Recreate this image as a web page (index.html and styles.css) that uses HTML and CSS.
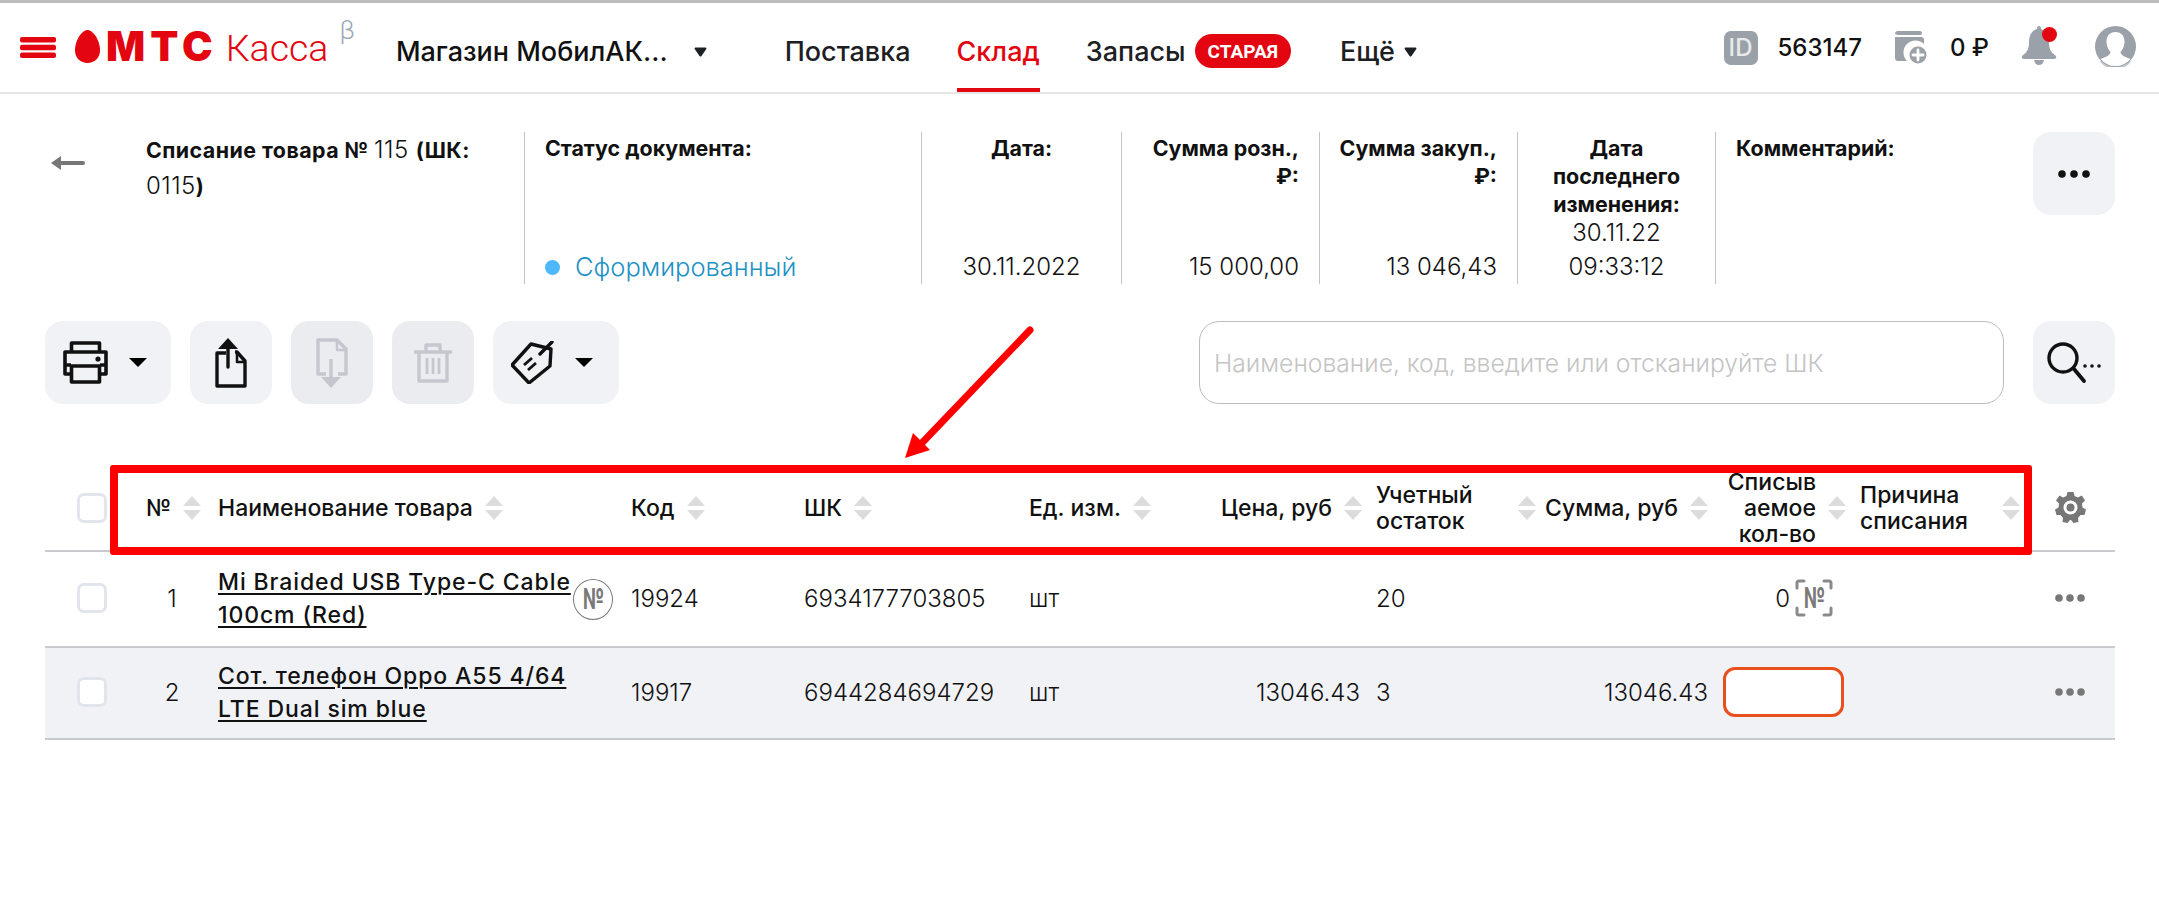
FILE: index.html
```html
<!DOCTYPE html>
<html lang="ru">
<head>
    <meta charset="UTF-8">
    <title>МТС Касса</title>
    <link rel="stylesheet" href="styles.css">
</head>
<body>
    <header class="topbar">
        <svg class="burger" width="36" height="21" viewBox="0 0 36 21" fill="#e30611"><rect width="36" height="5.4" rx="2"/><rect y="7.8" width="36" height="5.4" rx="2"/><rect y="15.6" width="36" height="5.4" rx="2"/></svg>
        <svg class="egg" width="25" height="33" viewBox="0 0 25 33" fill="#e30611"><path d="M12.5 0C7 0 0 10 0 20.500C0 28 5.500 33 12.500 33S25 28 25 20.500C25 10 18 0 12.500 0Z"/></svg>
        <span class="logo-mts">МТС</span>
        <span class="logo-kassa">Касса</span>
        <span class="logo-beta">β</span>
        <span class="store">Магазин МобилАК...</span>
        <svg class="caret-sm" width="13" height="10" viewBox="0 0 13 10"><path d="M1.500 0.500H11.500Q13 0.500 12.300 2L7.500 9Q6.500 10 5.500 9L0.700 2Q0 0.500 1.500 0.500Z"/></svg>
        <nav class="nav">
            <a class="nav-link">Поставка</a>
            <a class="nav-link active">Склад</a>
            <a class="nav-link">Запасы <span class="badge">СТАРАЯ</span></a>
            <a class="nav-link">Ещё
                <svg class="caret-sm" width="13" height="10" viewBox="0 0 13 10"><path d="M1.500 0.500H11.500Q13 0.500 12.300 2L7.500 9Q6.500 10 5.500 9L0.700 2Q0 0.500 1.500 0.500Z"/></svg>
            </a>
        </nav>
        <div class="user">
            <span class="id-box">ID</span>
            <span class="user-id">563147</span>
            <svg class="wallet" width="34" height="34" viewBox="0 0 34 34"><path fill="#9aa1a9" d="M3 0H25Q27 0 27 2T25 4H3V0ZM0 3Q0 0 3 0V4ZM0 6H26Q29 6 29 9V13A11 11 0 0 0 12 30H3Q0 30 0 27Z"/><circle cx="23" cy="24" r="10" fill="#fff"/><circle cx="23" cy="24" r="8.500" fill="#9aa1a9"/><path d="M23 19V29M18 24H28" stroke="#fff" stroke-width="2.800" stroke-linecap="round"/></svg>
            <span class="balance">0 ₽</span>
            <svg class="bell" width="36" height="40" viewBox="0 0 36 40"><path fill="#9aa1a9" d="M16 3Q16 0 18 0T20 3C26 5 28 10 28 17C28 24 31 27 35 30Q36 33 33 33H3Q0 33 1 30C5 27 8 24 8 17C8 10 10 5 16 3ZM13 34H23Q22 39 18 39T13 34Z"/><circle cx="28.500" cy="8.500" r="7.500" fill="#e30611"/></svg>
            <svg class="avatar" width="41" height="41" viewBox="0 0 41 41"><circle cx="20.500" cy="20.500" r="20.500" fill="#9aa1a9"/><path fill="#fff" d="M20.500 6C27 6 30 11 29.500 17C29 21 27.500 24 25.500 26C25.500 29 30 31 35.500 33A19.500 19.500 0 0 1 5.500 33C11 31 15.500 29 15.500 26C13.500 24 12 21 11.500 17C11 11 14 6 20.500 6Z"/><path fill="#9aa1a9" d="M6.500 34.500A19 19 0 0 0 34.500 34.500L36 36A20.500 20.500 0 0 1 5 36Z" opacity="0.600"/></svg>
        </div>
    </header>

    <main class="page">
        <section class="doc">
            <div class="doc-back">
                <svg width="34" height="14" viewBox="0 0 34 14" fill="#777"><path d="M0 7L10 0V5H32Q34 5 34 7T32 9H10V14Z"/></svg>
            </div>
            <div class="doc-title"><b>Списание товара № </b>115 <b>(ШК:</b> 0115<b>)</b></div>
            <div class="doc-col doc-status">
                <b>Статус документа:</b>
                <span class="status-value"><i class="status-dot"></i>Сформированный</span>
            </div>
            <div class="doc-col center">
                <b>Дата:</b>
                <span>30.11.2022</span>
            </div>
            <div class="doc-col right">
                <b>Сумма розн., ₽:</b>
                <span>15 000,00</span>
            </div>
            <div class="doc-col right">
                <b>Сумма закуп., ₽:</b>
                <span>13 046,43</span>
            </div>
            <div class="doc-col center">
                <b>Дата последнего изменения:</b>
                <span>30.11.22 09:33:12</span>
            </div>
            <div class="doc-col doc-comment">
                <b>Комментарий:</b>
            </div>
            <button class="tool square">
                <svg width="32" height="8" viewBox="0 0 32 8" fill="#111"><circle cx="4" cy="4" r="3.800"/><circle cx="16" cy="4" r="3.800"/><circle cx="28" cy="4" r="3.800"/></svg>
            </button>
        </section>

        <section class="toolbar">
            <button class="tool wide">
                <svg width="45" height="43" viewBox="0 0 45 43" fill="none" stroke="#111" stroke-width="3.600" stroke-linejoin="round"><path d="M8.500 11V2H36.500V11M8.500 33H2V11H43V33H36.500"/><path d="M8.500 25H36.500V41H8.500Z"/><path d="M2 24H8M37 24H43"/><circle cx="35" cy="18" r="2.600" fill="#111" stroke="none"/></svg>
                <svg class="caret" width="18" height="9" viewBox="0 0 18 9"><path d="M0 0H18L9 9Z"/></svg>
            </button>
            <button class="tool">
                <svg width="32" height="50" viewBox="0 0 32 50" fill="none" stroke="#111" stroke-width="3.400" stroke-linejoin="round"><path d="M11 15H2V48H30V23L22 14H20"/><path d="M22 14V24H30" stroke-width="2.500"/><path d="M13 29V10" stroke-linecap="round"/><path d="M13 0L23 11H3Z" fill="#111" stroke="none"/></svg>
            </button>
            <button class="tool off">
                <svg width="32" height="50" viewBox="0 0 32 50" fill="none" stroke="#c4c8ce" stroke-width="3.400" stroke-linejoin="round"><path d="M10 36H2V2H21L30 11V36H22"/><path d="M21 2V12H30" stroke-width="2.500"/><path d="M15 21V41"/><path d="M15 50L5 39H25Z" fill="#c4c8ce" stroke="none"/></svg>
            </button>
            <button class="tool off">
                <svg width="38" height="40" viewBox="0 0 38 40" fill="none" stroke="#c4c8ce" stroke-width="3.400" stroke-linejoin="round"><path d="M1 9H37" stroke-linecap="round"/><path d="M12 9V2H26V9"/><path d="M5 9V38H33V9"/><path d="M13 15V31M19 15V31M25 15V31" stroke-width="2.800"/></svg>
            </button>
            <button class="tool wide">
                <svg width="43" height="43" viewBox="0 0 43 43" fill="none" stroke="#111" stroke-width="3.400" stroke-linejoin="round"><path d="M20 3L40 8L39 25L18 42L1 24Z"/><path d="M29 13L41 1" stroke-linecap="round"/><path d="M13 24L21 17M17 29L25 22" stroke-width="2.800"/></svg>
                <svg class="caret" width="18" height="9" viewBox="0 0 18 9"><path d="M0 0H18L9 9Z"/></svg>
            </button>
            <div class="search-field">Наименование, код, введите или отсканируйте ШК</div>
            <button class="tool square">
                <svg width="54" height="44" viewBox="0 0 54 44" fill="none" stroke="#111"><circle cx="16" cy="17" r="14" stroke-width="3.400"/><path d="M27 28L37 40" stroke-width="3.800" stroke-linecap="round"/><circle cx="38" cy="25" r="1.800" fill="#111" stroke="none"/><circle cx="45" cy="25" r="1.800" fill="#111" stroke="none"/><circle cx="52" cy="25" r="1.800" fill="#111" stroke="none"/></svg>
            </button>
        </section>

        <section class="grid">
            <div class="row head">
                <div class="cell"><i class="check"></i></div>
                <div class="cell th th-no">№ <svg class="sort" width="18" height="24" viewBox="0 0 18 24"><path d="M9 0L18 10H0ZM0 14H18L9 24Z"/></svg></div>
                <div class="cell th">Наименование товара <svg class="sort" width="18" height="24" viewBox="0 0 18 24"><path d="M9 0L18 10H0ZM0 14H18L9 24Z"/></svg></div>
                <div class="cell th">Код <svg class="sort" width="18" height="24" viewBox="0 0 18 24"><path d="M9 0L18 10H0ZM0 14H18L9 24Z"/></svg></div>
                <div class="cell th">ШК <svg class="sort" width="18" height="24" viewBox="0 0 18 24"><path d="M9 0L18 10H0ZM0 14H18L9 24Z"/></svg></div>
                <div class="cell th">Ед. изм. <svg class="sort" width="18" height="24" viewBox="0 0 18 24"><path d="M9 0L18 10H0ZM0 14H18L9 24Z"/></svg></div>
                <div class="cell th end">Цена, руб <svg class="sort" width="18" height="24" viewBox="0 0 18 24"><path d="M9 0L18 10H0ZM0 14H18L9 24Z"/></svg></div>
                <div class="cell th pad between"><span>Учетный остаток</span> <svg class="sort" width="18" height="24" viewBox="0 0 18 24"><path d="M9 0L18 10H0ZM0 14H18L9 24Z"/></svg></div>
                <div class="cell th end">Сумма, руб <svg class="sort" width="18" height="24" viewBox="0 0 18 24"><path d="M9 0L18 10H0ZM0 14H18L9 24Z"/></svg></div>
                <div class="cell th end th-qty"><span>Списыв аемое кол-во</span> <svg class="sort" width="18" height="24" viewBox="0 0 18 24"><path d="M9 0L18 10H0ZM0 14H18L9 24Z"/></svg></div>
                <div class="cell th pad between"><span>Причина списания</span> <svg class="sort" width="18" height="24" viewBox="0 0 18 24"><path d="M9 0L18 10H0ZM0 14H18L9 24Z"/></svg></div>
                <div class="cell mid">
                    <svg width="31" height="31" viewBox="0 0 31 31"><path fill="#777" fill-rule="evenodd" d="M12.500 0H18.500L19.500 4L23 5.500L26.500 3.500L27.500 4.500L27.500 4.500L30 8.500L27 11.500L27.500 15.500L31 17.500L29.500 23L25.500 23L23 26L23.500 30L18.500 31L16 28H15L12.500 31L7.500 30L8 26L5.500 23L1.500 23L0 17.500L3.500 15.500L4 11.500L1 8.500L4.500 3.500L8 5.500L11.500 4ZM15.500 8.500A7 7 0 1 0 15.500 22.500A7 7 0 1 0 15.500 8.500ZM15.500 11.500A4 4 0 1 1 15.500 19.500A4 4 0 1 1 15.500 11.500Z"/></svg>
                </div>
            </div>

            <div class="row item">
                <div class="cell"><i class="check"></i></div>
                <div class="cell num">1</div>
                <div class="cell name"><a class="name-link">Mi Braided USB Type-C Cable 100cm (Red)</a><span class="no-mark"><span class="no-glyph">№</span></span></div>
                <div class="cell">19924</div>
                <div class="cell">6934177703805</div>
                <div class="cell">шт</div>
                <div class="cell end price"></div>
                <div class="cell pad">20</div>
                <div class="cell end"></div>
                <div class="cell end qty-zero">0<span class="scan"><svg width="38" height="38" viewBox="0 0 38 38" fill="none" stroke="#8a8a8a" stroke-width="3" stroke-linecap="round"><path d="M9 2H4Q2 2 2 4V9M29 2H34Q36 2 36 4V9M9 36H4Q2 36 2 34V29M29 36H34Q36 36 36 34V29"/></svg><span class="scan-no"><span class="no-glyph">№</span></span></span></div>
                <div class="cell pad"></div>
                <div class="cell mid"><svg width="30" height="8" viewBox="0 0 30 8" fill="#777"><circle cx="4" cy="4" r="3.800"/><circle cx="15" cy="4" r="3.800"/><circle cx="26" cy="4" r="3.800"/></svg></div>
            </div>

            <div class="row item shaded">
                <div class="cell"><i class="check"></i></div>
                <div class="cell num">2</div>
                <div class="cell name"><a class="name-link">Сот. телефон Oppo A55 4/64 LTE Dual sim blue</a></div>
                <div class="cell">19917</div>
                <div class="cell">6944284694729</div>
                <div class="cell">шт</div>
                <div class="cell end price">13046.43</div>
                <div class="cell pad">3</div>
                <div class="cell end">13046.43</div>
                <div class="cell end"><input class="qty-input" type="text"></div>
                <div class="cell pad"></div>
                <div class="cell mid"><svg width="30" height="8" viewBox="0 0 30 8" fill="#777"><circle cx="4" cy="4" r="3.800"/><circle cx="15" cy="4" r="3.800"/><circle cx="26" cy="4" r="3.800"/></svg></div>
            </div>
        </section>
    </main>

    <!-- annotation drawn over the screenshot -->
    <div class="mark-box"></div>
    <svg class="mark-arrow" width="140" height="140" viewBox="0 0 140 140" fill="#f00"><path d="M135 5L25 120" stroke="#f00" stroke-width="7" stroke-linecap="round"/><path d="M10 133L18 108L35 125Z"/></svg>
</body>
</html>
```

FILE: styles.css
```css
* { box-sizing: border-box; }

body {
    margin: 0;
    border-top: 3px solid #bdbdbd;
    font-family: Inter, "Noto Sans", sans-serif;
    font-weight: 300;
    font-size: 24px;
    color: #111;
    background: #fff;
    position: relative;
}

/* Top bar */
.topbar {
    display: flex;
    align-items: center;
    height: 91px;
    padding-left: 20px;
    border-bottom: 2px solid #e6e6e6;
}
.burger { margin-top: -1px; }
.egg { margin-left: 19px; margin-top: -3px; }
.logo-mts {
    margin-left: 6px;
    margin-top: -4px;
    font-weight: 900;
    font-size: 41px;
    letter-spacing: 5px;
    color: #e30611;
}
.logo-kassa {
    margin-left: 8px;
    font-family: Roboto, sans-serif;
    font-size: 37.5px;
    color: #e30611;
}
.logo-beta {
    margin-left: 11px;
    margin-top: -36px;
    font-family: Roboto, sans-serif;
    font-size: 26px;
    color: #9aa8b5;
}
.store {
    margin-top: 8px;
    margin-left: 41px;
    font-weight: 500;
    font-size: 27px;
    white-space: nowrap;
}
.caret-sm { fill: #1d2023; }
.topbar > .caret-sm { margin-left: 26px; margin-top: 8px; }

.nav {
    display: flex;
    align-self: stretch;
    margin-left: 78px;
    gap: 46px;
}
.nav-link {
    display: flex;
    align-items: center;
    gap: 9px;
    height: 100%;
    padding-top: 12px;
    border-bottom: 4px solid transparent;
    font-weight: 500;
    font-size: 27px;
    color: #1d2023;
}
.nav-link:last-child { margin-left: 3px; }
.nav-link.active { color: #e30611; border-bottom-color: #e30611; }
.badge {
    display: flex;
    align-items: center;
    height: 34px;
    margin-top: -1px;
    padding: 0 13px;
    border-radius: 17px;
    background: #e30611;
    color: #fff;
    font-family: Roboto, sans-serif;
    font-weight: 700;
    font-size: 19px;
}

.user {
    display: flex;
    align-items: center;
    margin-left: auto;
    padding-right: 23px;
}
.id-box {
    width: 34px;
    height: 34px;
    border-radius: 7px;
    background: #9aa1a9;
    color: #e8eaec;
    font-size: 24px;
    font-weight: 500;
    line-height: 34px;
    text-align: center;
}
.user-id { margin-left: 20px; font-weight: 500; font-size: 24px; }
.wallet { margin-left: 33px; }
.balance { margin-left: 21px; font-weight: 500; font-size: 24px; }
.bell { margin-left: 32px; margin-top: -3px; }
.avatar { margin-left: 38px; margin-top: -3px; }

/* Document summary */
.page { padding: 38px 44px 0 45px; }
.doc {
    display: grid;
    grid-template-columns: 101px 378px 397px 200px 198px 198px 198px 318px 82px;
    height: 152px;
}
.doc b { font-weight: 700; font-size: 21.4px; }
.doc-back { padding: 15px 0 0 6px; }
.doc-title { padding-right: 20px; line-height: 36px; letter-spacing: 0.45px; }
.doc-col {
    display: flex;
    flex-direction: column;
    justify-content: space-between;
    padding: 2px 20px 0;
    border-left: 1px solid #c4c4c4;
    line-height: 28px;
}
.doc-col span { margin-top: -4px; line-height: 34px; }
.doc-col.center { text-align: center; }
.doc-col.right { padding-left: 10px; text-align: right; }
.status-value { display: flex; align-items: center; color: #1e91c4; font-size: 25.5px; }
.status-dot {
    width: 15px;
    height: 15px;
    margin-right: 15px;
    border-radius: 50%;
    background: #4db8fb;
}

/* Toolbar */
.tool {
    display: flex;
    align-items: center;
    justify-content: center;
    flex: none;
    width: 82px;
    height: 83px;
    margin: 0;
    padding: 0;
    border: 0;
    border-radius: 18px;
    background: #f1f2f6;
}
.tool.wide { justify-content: flex-start; width: 126px; padding-left: 18px; gap: 21px; }
.tool.off { background: #ebecf0; }
.toolbar {
    display: flex;
    gap: 19px;
    margin-top: 37px;
}
.search-field {
    display: flex;
    align-items: center;
    flex: 1;
    margin-left: 561px;
    margin-right: 10px;
    padding-left: 14px;
    border: 1px solid #bdbdbd;
    border-radius: 20px;
    color: #c4c4c4;
    font-size: 24.7px;
}

/* Table */
.grid { margin-top: 61px; }
.row {
    display: grid;
    grid-template-columns: 85px 88px 413px 173px 225px 171px 162px 174px 172px 138px 174px 95px;
    border-bottom: 2px solid #c8c9cc;
}
.row.head { height: 87px; }
.row.item { height: 96px; }
.row.shaded { height: 92px; background: #f1f2f6; }
.cell { display: flex; align-items: center; }
.item .cell { padding-bottom: 2px; }
.item .cell.name { padding-bottom: 0; }
.check {
    width: 30px;
    height: 30px;
    margin-left: 32px;
    border: 3px solid #e2e5ec;
    border-radius: 7px;
    background: #fff;
}
.th { gap: 12px; font-weight: 500; font-size: 23px; line-height: 26px; }
.th-no { padding-left: 16px; }
.end { justify-content: flex-end; }
.item .price { padding-right: 2px; }
.pad { padding-left: 14px; }
.between { justify-content: space-between; }
.th-qty span { width: 92px; text-align: right; }
.between span { width: 120px; }
.mid { justify-content: center; padding-left: 5px; }
.sort { flex: none; fill: #dcdcdc; }
.num { justify-content: center; padding-right: 4px; }
.name-link {
    width: 356px;
    font-weight: 500;
    font-size: 23px;
    line-height: 33px;
    letter-spacing: 0.9px;
    text-decoration: underline;
    text-decoration-thickness: 2px;
    text-underline-offset: 3px;
}
.no-mark {
    display: flex;
    align-items: center;
    justify-content: center;
    width: 40px;
    height: 41px;
    margin-left: -1px;
    border: 1.5px solid #7a7a7a;
    border-radius: 50%;
    background: #fff;
    color: #7a7a7a;
    font-weight: 800;
    font-size: 28px;
}
.no-glyph { display: inline-block; transform: scaleX(0.68); }
.qty-zero { padding-right: 13px; gap: 5px; }
.scan { position: relative; display: flex; }
.scan-no {
    position: absolute;
    inset: 0;
    display: flex;
    align-items: center;
    justify-content: center;
    color: #7a7a7a;
    font-weight: 800;
    font-size: 28px;
}
.qty-input {
    width: 121px;
    height: 50px;
    margin-right: 2px;
    border: 3px solid #e9501e;
    border-radius: 12px;
    background: #fff;
}

/* Annotation */
.mark-box {
    position: absolute;
    left: 110px;
    top: 462px;
    width: 1922px;
    height: 90px;
    border: 8px solid #f00;
    border-radius: 3px;
}
.mark-arrow {
    position: absolute;
    left: 895px;
    top: 322px;
}
```
